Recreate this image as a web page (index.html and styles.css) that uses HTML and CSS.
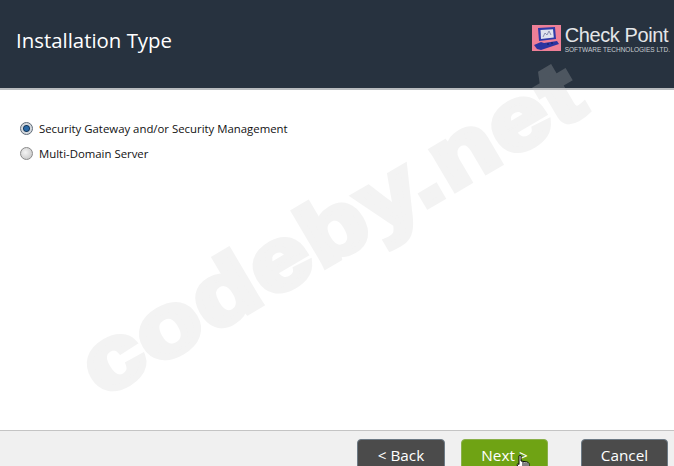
FILE: index.html
```html
<!DOCTYPE html>
<html lang="en">
<head>
  <meta charset="UTF-8">
  <meta name="viewport" content="width=device-width, initial-scale=1.0">
  <title>Installation Type</title>
  <link rel="stylesheet" href="styles.css">
</head>
<body>
  <div class="wizard">
    <header class="header">
      <h1>Installation Type</h1>
      <div class="logo">
        <svg class="logo-icon" width="29" height="26" viewBox="0 0 29 26">
          <rect width="29" height="26" fill="#ee7f97"/>
          <path d="M6 3 L23 2 L24 14 L7 16 Z" fill="#2f3aa8"/>
          <path d="M8.500 5 L21 4.300 L21.800 12.500 L9 14 Z" fill="#dfe3ee"/>
          <path d="M11 12 L13 8 L15 10 L17 6 L19 10" fill="none" stroke="#8a90b0" stroke-width="1"/>
          <path d="M2 20 L9 17 L12 18 L25 16 L27 19 L9 25 L5 24 Z" fill="#2b34a0"/>
          <path d="M15 19 h2 M19 18 h2" stroke="#101a50" stroke-width="1"/>
        </svg>
        <div class="logo-text">
          <div class="logo-name">Check Point</div>
          <div class="logo-sub">SOFTWARE TECHNOLOGIES LTD.</div>
        </div>
      </div>
    </header>

    <main class="content">
      <label class="option">
        <span class="radio radio-on"></span>
        Security Gateway and/or Security Management
      </label>
      <label class="option">
        <span class="radio"></span>
        Multi-Domain Server
      </label>
    </main>

    <footer class="footer">
      <div class="btn">&lt; Back</div>
      <div class="btn btn-next">Next &gt;</div>
      <div class="btn btn-cancel">Cancel</div>
    </footer>
  </div>

  <div class="watermark">codeby.net</div>

  <!-- mouse pointer over the Next button -->
  <svg class="cursor" width="14" height="17" viewBox="0 0 14 17">
    <path d="M3 1 C3 0 5 0 5 1 L5 6 L11 7 C12.500 7.500 13 8 13 9 L13 13 L11 16 L5 16 L1 10 C1 9 2 8.500 3 9.500 Z" fill="#fff" stroke="#000" stroke-width="1"/>
    <path d="M7 7 V11 M9 7.500 V11 M11 8 V11" stroke="#000" stroke-width="1"/>
  </svg>
</body>
</html>
```

FILE: styles.css
```css
html, body {
  margin: 0;
  height: 100%;
  overflow: hidden;
}
body {
  font-family: "Open Sans", "Noto Sans", sans-serif;
  position: relative;
  background: #fff;
}
.wizard {
  display: flex;
  flex-direction: column;
  height: 466px;
}
.header {
  height: 88px;
  flex: none;
  background: #27323f;
  border-bottom: 2px solid #b9bcbf;
  display: flex;
  align-items: center;
  justify-content: space-between;
  padding: 0 4px 0 16px;
}
.header h1 {
  margin: 0 0 8px 0;
  font-size: 20.4px;
  font-weight: 400;
  color: #fff;
}
.logo {
  display: flex;
  align-items: flex-start;
  gap: 4px;
  margin-bottom: 10px;
}
.logo-icon {
  display: block;
}
.logo-name {
  font-family: "Liberation Sans", Arial, sans-serif;
  font-size: 20px;
  line-height: 21px;
  letter-spacing: -0.4px;
  color: #e4e6e8;
}
.logo-sub {
  font-family: "Liberation Sans", Arial, sans-serif;
  font-size: 6.5px;
  line-height: 7px;
  color: #c9ced3;
  white-space: nowrap;
}
.content {
  flex: 1;
  padding: 26px 20px 0;
}
.option {
  display: flex;
  align-items: center;
  gap: 6px;
  height: 25px;
  font-size: 11.38px;
  color: #111;
}
.radio {
  width: 13px;
  height: 13px;
  box-sizing: border-box;
  border-radius: 50%;
  border: 1px solid #8a8a8a;
  background: radial-gradient(circle at 40% 40%, #f4f4f4, #c0c0c0);
}
.radio-on {
  background: radial-gradient(circle, #2a6aa8 0 2px, #14395f 3px, #d4d8dd 4px);
  border-color: #5f6b78;
}
.footer {
  height: 27px;
  flex: none;
  background: #f0f0f0;
  border-top: 1px solid #c4c4c4;
  display: flex;
  padding: 8px 6px 0 357px;
  gap: 16px;
  overflow: hidden;
}
.btn {
  width: 88px;
  height: 36px;
  flex: none;
  box-sizing: border-box;
  padding-top: 5px;
  text-align: center;
  font-size: 15.3px;
  line-height: 20px;
  color: #fff;
  background: #4b4b4b;
  border: 1px solid #6d7a85;
  border-radius: 4px;
}
.btn-next {
  width: 87px;
  background: #6fa314;
  border-color: #8ab04a;
}
.btn-cancel {
  width: 87px;
  margin-left: 17px;
}
.watermark {
  position: absolute;
  left: 95px;
  top: 174px;
  font-family: "Liberation Sans", Arial, sans-serif;
  font-size: 87px;
  line-height: 108px;
  letter-spacing: 2px;
  font-weight: 700;
  color: #ccc;
  -webkit-text-stroke: 6px #ccc;
  opacity: 0.23;
  white-space: nowrap;
  transform: rotate(-30.5deg) scaleX(1.2);
  pointer-events: none;
}
.cursor {
  position: absolute;
  left: 516px;
  top: 455px;
}
```
